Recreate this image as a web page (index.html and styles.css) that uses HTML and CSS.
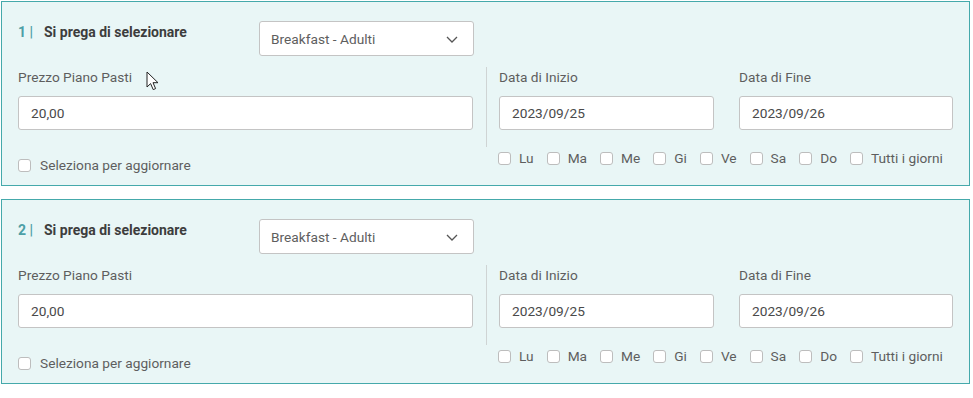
FILE: index.html
```html
<!DOCTYPE html>
<html lang="it">
<head>
<meta charset="utf-8">
<link rel="stylesheet" href="styles.css">
</head>
<body>
<div class="list">
  <section class="panel">
    <div class="head">
      <div class="title"><span class="num">1 |</span><span class="ttl">Si prega di selezionare</span></div>
      <div class="select"><span>Breakfast - Adulti</span><svg class="chev" width="12" height="7" viewBox="0 0 12 7"><path d="M1 1l5 5 5-5" fill="none" stroke="#555" stroke-width="1.3"/></svg></div>
    </div>
    <div class="body">
      <div class="left">
        <div class="label">Prezzo Piano Pasti</div>
        <div class="input">20,00</div>
        <label class="check main-check"><span class="box"></span>Seleziona per aggiornare</label>
      </div>
      <div class="right">
        <div class="dates">
          <div class="field"><div class="label">Data di Inizio</div><div class="input">2023/09/25</div></div>
          <div class="field"><div class="label">Data di Fine</div><div class="input">2023/09/26</div></div>
        </div>
        <div class="days">
          <label class="check"><span class="box"></span>Lu</label>
          <label class="check"><span class="box"></span>Ma</label>
          <label class="check"><span class="box"></span>Me</label>
          <label class="check"><span class="box"></span>Gi</label>
          <label class="check"><span class="box"></span>Ve</label>
          <label class="check"><span class="box"></span>Sa</label>
          <label class="check"><span class="box"></span>Do</label>
          <label class="check"><span class="box"></span>Tutti i giorni</label>
        </div>
      </div>
    </div>
    <svg class="cursor" width="14" height="21" viewBox="0 0 14 21"><path d="M1 1v15l3.6-3.4 2.6 6 2.4-1-2.6-5.9H12z" fill="#fff" stroke="#222" stroke-width="1" stroke-linejoin="round"/></svg>
  </section>
  <section class="panel">
    <div class="head">
      <div class="title"><span class="num">2 |</span><span class="ttl">Si prega di selezionare</span></div>
      <div class="select"><span>Breakfast - Adulti</span><svg class="chev" width="12" height="7" viewBox="0 0 12 7"><path d="M1 1l5 5 5-5" fill="none" stroke="#555" stroke-width="1.3"/></svg></div>
    </div>
    <div class="body">
      <div class="left">
        <div class="label">Prezzo Piano Pasti</div>
        <div class="input">20,00</div>
        <label class="check main-check"><span class="box"></span>Seleziona per aggiornare</label>
      </div>
      <div class="right">
        <div class="dates">
          <div class="field"><div class="label">Data di Inizio</div><div class="input">2023/09/25</div></div>
          <div class="field"><div class="label">Data di Fine</div><div class="input">2023/09/26</div></div>
        </div>
        <div class="days">
          <label class="check"><span class="box"></span>Lu</label>
          <label class="check"><span class="box"></span>Ma</label>
          <label class="check"><span class="box"></span>Me</label>
          <label class="check"><span class="box"></span>Gi</label>
          <label class="check"><span class="box"></span>Ve</label>
          <label class="check"><span class="box"></span>Sa</label>
          <label class="check"><span class="box"></span>Do</label>
          <label class="check"><span class="box"></span>Tutti i giorni</label>
        </div>
      </div>
    </div>
  </section>
</div>
</body>
</html>
```
FILE: styles.css
```css
* { box-sizing: border-box; }
html, body { margin: 0; padding: 0; background: #fff; }
body {
  font-family: Roboto, "Liberation Sans", sans-serif;
  font-size: 13.7px;
  color: #5e5e5e;
}
.list {
  padding: 1px 0 0 1px;
  width: 970px;
  display: flex;
  flex-direction: column;
  gap: 13px;
}
.panel {
  position: relative;
  height: 185px;
  border: 1px solid #45a9ab;
  background: #e9f6f6;
  padding: 19px 16px 0 16px;
}
.head {
  display: flex;
  align-items: flex-start;
}
.title {
  width: 241px;
  padding-top: 3px;
  font-weight: 700;
  font-size: 14px;
  line-height: 17px;
  display: flex;
}
.num { color: #4d9fa6; width: 26px; }
.ttl { color: #3d3d3d; }
.select {
  width: 215px;
  height: 35px;
  background: #fff;
  border: 1px solid #c4c4c4;
  border-radius: 3px;
  display: flex;
  align-items: center;
  justify-content: space-between;
  padding: 0 15px 0 11px;
  color: #5e5e5e;
}
.chev { margin-top: 1px; }
.body {
  display: flex;
}
.left {
  width: 455px;
  flex: none;
}
.label {
  line-height: 18px;
}
.left .label { margin-top: 12px; }
.input {
  margin-top: 10px;
  height: 34px;
  background: #fff;
  border: 1px solid #c4c4c4;
  border-radius: 3px;
  display: flex;
  align-items: center;
  padding: 0 12px;
  color: #4a4a4a;
}
.right {
  margin-left: 13px;
  width: 467px;
}
.dates {
  margin-top: 11px;
  height: 80px;
  border-left: 1px solid #cfd4d4;
  padding: 1px 0 0 12px;
  display: flex;
  gap: 25px;
}
.dates .field:first-child { width: 215px; }
.dates .field:last-child { width: 214px; }
.check {
  display: flex;
  align-items: center;
  line-height: 18px;
}
.box {
  width: 13px;
  height: 13px;
  border: 1px solid #bdbdbd;
  border-radius: 3px;
  background: #fff;
  margin-right: 8px;
  flex: none;
}
.main-check { margin-top: 26px; }
.main-check .box { margin-right: 9px; }
.days {
  margin-top: 2px;
  padding-left: 12px;
  display: flex;
  gap: 13px;
}
.cursor {
  position: absolute;
  left: 144px;
  top: 69px;
}
```
